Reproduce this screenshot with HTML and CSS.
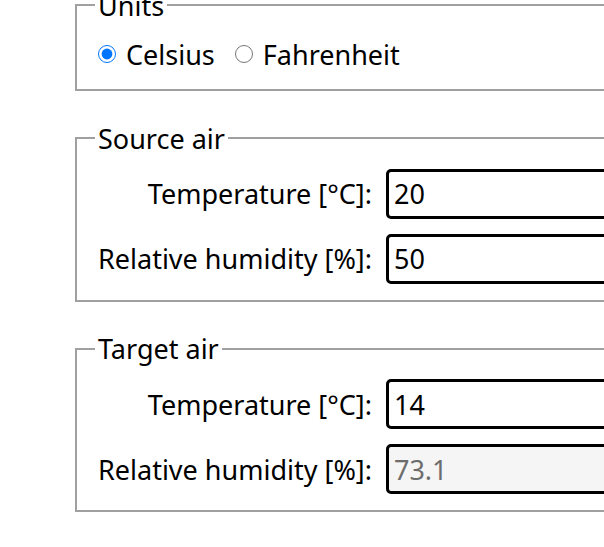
FILE: index.html
```html
<!DOCTYPE html>
<html>
<head>
<meta charset="utf-8">
<link rel="stylesheet" href="styles.css">
</head>
<body>
<div class="page">
  <fieldset class="box units">
    <legend>Units</legend>
    <div class="radios">
      <label class="opt"><input type="radio" name="u" checked>Celsius</label>
      <label class="opt"><input type="radio" name="u">Fahrenheit</label>
    </div>
  </fieldset>
  <fieldset class="box">
    <legend>Source air</legend>
    <div class="grid">
      <label class="lbl">Temperature [°C]:</label>
      <input class="field" type="text" value="20">
      <label class="lbl">Relative humidity [%]:</label>
      <input class="field" type="text" value="50">
    </div>
  </fieldset>
  <fieldset class="box">
    <legend>Target air</legend>
    <div class="grid">
      <label class="lbl">Temperature [°C]:</label>
      <input class="field" type="text" value="14">
      <label class="lbl">Relative humidity [%]:</label>
      <input class="field" type="text" value="73.1" disabled>
    </div>
  </fieldset>
</div>
</body>
</html>
```
FILE: styles.css
```css
html, body {
  margin: 0;
  padding: 0;
  overflow: hidden;
  background: #fff;
}
body {
  font-family: "Noto Sans", "Open Sans", sans-serif;
  font-size: 27px;
  line-height: 37px;
  color: #000;
}
.page {
  margin-top: -13.5px;
  padding-left: 75px;
}
.box {
  width: 700px;
  margin: 0 0 28.5px 0;
  border: 2px solid #a0a0a0;
  padding: 12px 18px 16px 18px;
}
.box legend {
  padding: 0 3px;
  line-height: 37px;
}
.units {
  padding-top: 12px;
  padding-bottom: 16.5px;
}
.radios {
  display: flex;
  align-items: center;
  gap: 20px;
  height: 37px;
  padding-left: 3px;
}
.opt {
  display: flex;
  align-items: center;
}
.opt input {
  width: 18px;
  height: 18px;
  margin: 0 10px 0 0;
}
.grid {
  display: grid;
  grid-template-columns: max-content 300px;
  column-gap: 14px;
  row-gap: 15px;
  align-items: center;
  padding-left: 3px;
}
.lbl {
  text-align: right;
}
.field {
  box-sizing: border-box;
  height: 50px;
  border: 3px solid #000;
  border-radius: 5px;
  padding: 0 5px;
  font-family: inherit;
  font-size: 27px;
  color: #000;
  background: #fff;
  outline: none;
}
.field:disabled {
  background: #f5f5f5;
  color: #6d6d6d;
}
```
